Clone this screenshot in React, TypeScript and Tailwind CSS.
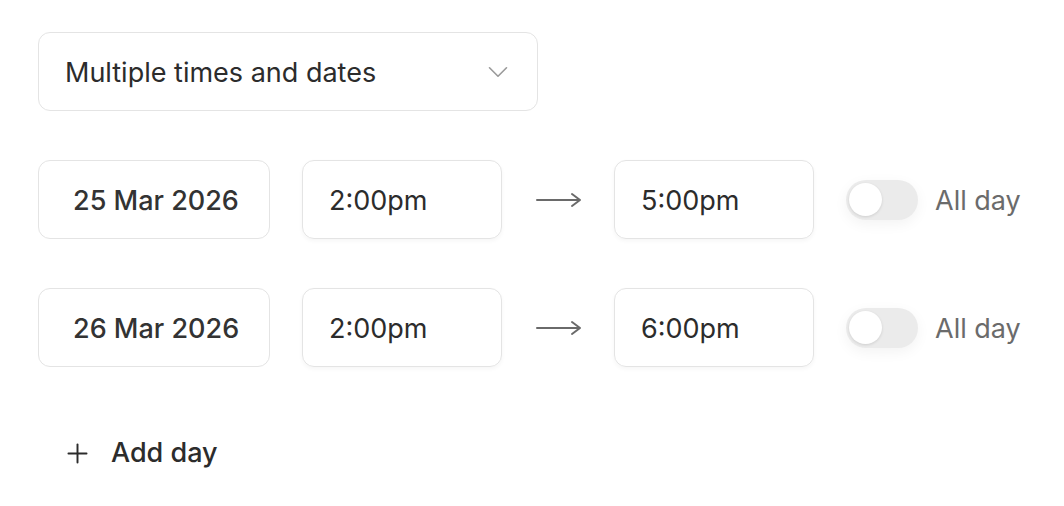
import { ChevronDown, Plus } from "lucide-react";

const rows = [
  { date: "25 Mar 2026", start: "2:00pm", end: "5:00pm" },
  { date: "26 Mar 2026", start: "2:00pm", end: "6:00pm" },
];

function Toggle() {
  return (
    <div className="flex h-[40px] w-[72px] items-center rounded-full bg-[#ebebeb] px-[3px] shadow-[0_4px_14px_rgba(0,0,0,0.05)]">
      <div className="h-[33px] w-[33px] rounded-full bg-white shadow-[0_1px_3px_rgba(0,0,0,0.12)]" />
    </div>
  );
}

export default function App() {
  return (
    <div
      className="min-h-screen bg-white pl-[38px] pt-[32px] text-[#2c2c2c]"
      style={{ fontFamily: "Inter, 'Noto Sans', sans-serif" }}
    >
      <div className="flex h-[79px] w-[500px] items-center justify-between rounded-[12px] border border-[#e4e4e4] pl-[26px] pr-[22px]">
        <span className="pt-[3px] text-[27px]">Multiple times and dates</span>
        <ChevronDown size={34} strokeWidth={1.15} className="text-[#9a9a9a]" />
      </div>

      <div className="mt-[49px] flex flex-col gap-[49px]">
        {rows.map((r) => (
          <div key={r.date} className="flex items-center">
            <div className="flex h-[79px] w-[232px] items-center rounded-[12px] border border-[#e4e4e4] pl-[34px] pt-[4px] text-[27px] font-medium text-[#333]">
              {r.date}
            </div>
            <div className="ml-[32px] flex h-[79px] w-[200px] items-center rounded-[12px] border border-[#e4e4e4] pl-[26px] pt-[4px] text-[27px] shadow-[0_2px_4px_rgba(0,0,0,0.04)]">
              {r.start}
            </div>
            <svg width="46" height="16" viewBox="0 0 46 16" className="ml-[34px] text-[#6a6a6a]">
              <path d="M1 8h43M36 2l8 6-8 6" fill="none" stroke="currentColor" strokeWidth="2" strokeLinecap="round" strokeLinejoin="round" />
            </svg>
            <div className="ml-[32px] flex h-[79px] w-[200px] items-center rounded-[12px] border border-[#e4e4e4] pl-[26px] pt-[4px] text-[27px] shadow-[0_2px_4px_rgba(0,0,0,0.04)]">
              {r.end}
            </div>
            <div className="ml-[32px]">
              <Toggle />
            </div>
            <span className="ml-[17px] pt-[4px] text-[27px] text-[#6b6b6b]">All day</span>
          </div>
        ))}
      </div>

      <button className="mt-[66px] ml-[24px] flex items-center gap-[18px] text-[27px] font-medium">
        <Plus size={31} strokeWidth={1.5} />
        Add day
      </button>
    </div>
  );
}
